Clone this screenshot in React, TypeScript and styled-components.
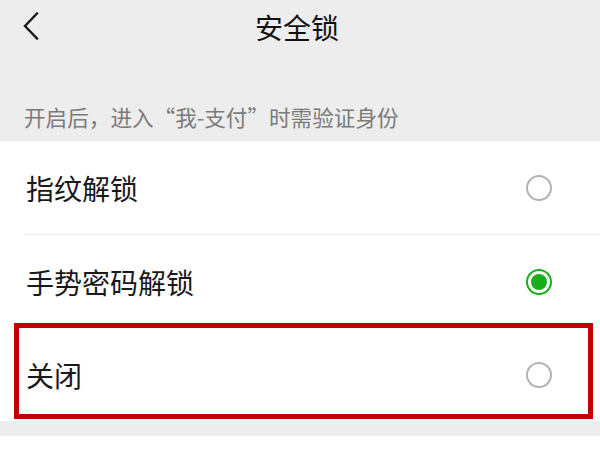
import { createGlobalStyle, styled } from 'styled-components'

// Экран настройки "安全锁" (WeChat)

const GlobalStyle = createGlobalStyle`
  html, body {
    margin: 0;
    padding: 0;
    background: #ffffff;
  }
  body {
    font-family: "Noto Sans CJK SC", "Noto Sans", sans-serif;
  }
`

type Option = {
  id: string
  label: string
  checked: boolean
  marked?: boolean
}

const options: Option[] = [
  { id: 'finger', label: '指纹解锁', checked: false },
  { id: 'gesture', label: '手势密码解锁', checked: true },
  { id: 'off', label: '关闭', checked: false, marked: true },
]

const BackIcon = () => (
  <svg width="20" height="28" viewBox="0 0 20 28" fill="none">
    <path d="M15 1.5 L3 14 L15 26.5" stroke="#1a1a1a" strokeWidth="2.4" strokeLinecap="square" />
  </svg>
)

const App = () => {
  return (
    <>
      <GlobalStyle />
      <StyledPage>
        <StyledHeader>
          <StyledBack>
            <BackIcon />
          </StyledBack>
          <StyledTitle>安全锁</StyledTitle>
        </StyledHeader>
        <StyledHint>开启后，进入“我-支付”时需验证身份</StyledHint>
        <StyledList>
          {options.map((item, index) => (
            <div key={item.id}>
              {index === 1 && <StyledDivider />}
              <StyledRow>
                <StyledLabel>{item.label}</StyledLabel>
                <StyledRadio $checked={item.checked} />
                {item.marked && <StyledMark />}
              </StyledRow>
            </div>
          ))}
        </StyledList>
        <StyledFooterGap />
      </StyledPage>
    </>
  )
}

export default App

const StyledPage = styled.div`
  width: 600px;
  height: 450px;
  overflow: hidden;
  display: flex;
  flex-direction: column;
  background: #ffffff;
`

const StyledHeader = styled.div`
  height: 54px;
  display: flex;
  align-items: center;
  justify-content: center;
  background: #ededed;
  position: relative;
`

const StyledBack = styled.div`
  position: absolute;
  left: 22px;
  top: 12px;
  display: flex;
  cursor: pointer;
`

const StyledTitle = styled.div`
  font-size: 28px;
  line-height: 1;
  color: #111111;
  margin-left: -6px;
`

const StyledHint = styled.div`
  height: 87px;
  box-sizing: border-box;
  padding: 0 24px 13px;
  display: flex;
  align-items: flex-end;
  background: #ededed;

  font-size: 21.6px;
  line-height: 1;
  color: #7b7b7b;
`

const StyledList = styled.div`
  display: flex;
  flex-direction: column;
  background: #ffffff;
`

const StyledDivider = styled.div`
  height: 1px;
  margin-left: 24px;
  background: #ececec;
`

const StyledRow = styled.div`
  height: 93px;
  box-sizing: border-box;
  padding: 0 48px 0 26px;
  display: flex;
  align-items: center;
  justify-content: space-between;
  position: relative;
`

const StyledLabel = styled.div`
  font-size: 28px;
  line-height: 1;
  color: #191919;
`

const StyledRadio = styled.div<{ $checked: boolean }>`
  width: 26px;
  height: 26px;
  box-sizing: border-box;
  border-radius: 50%;
  border: 2px solid ${({ $checked }) => ($checked ? '#1aad19' : '#b2b2b2')};
  padding: 3px;
  background: #ffffff;

  &::after {
    content: '';
    display: ${({ $checked }) => ($checked ? 'block' : 'none')};
    width: 100%;
    height: 100%;
    border-radius: 50%;
    background: #1aad19;
  }
`

const StyledMark = styled.div`
  position: absolute;
  left: 14px;
  right: 7px;
  top: -5px;
  bottom: 2px;
  border: 5px solid #c00000;
  pointer-events: none;
`

const StyledFooterGap = styled.div`
  height: 15px;
  background: #ededed;
`
